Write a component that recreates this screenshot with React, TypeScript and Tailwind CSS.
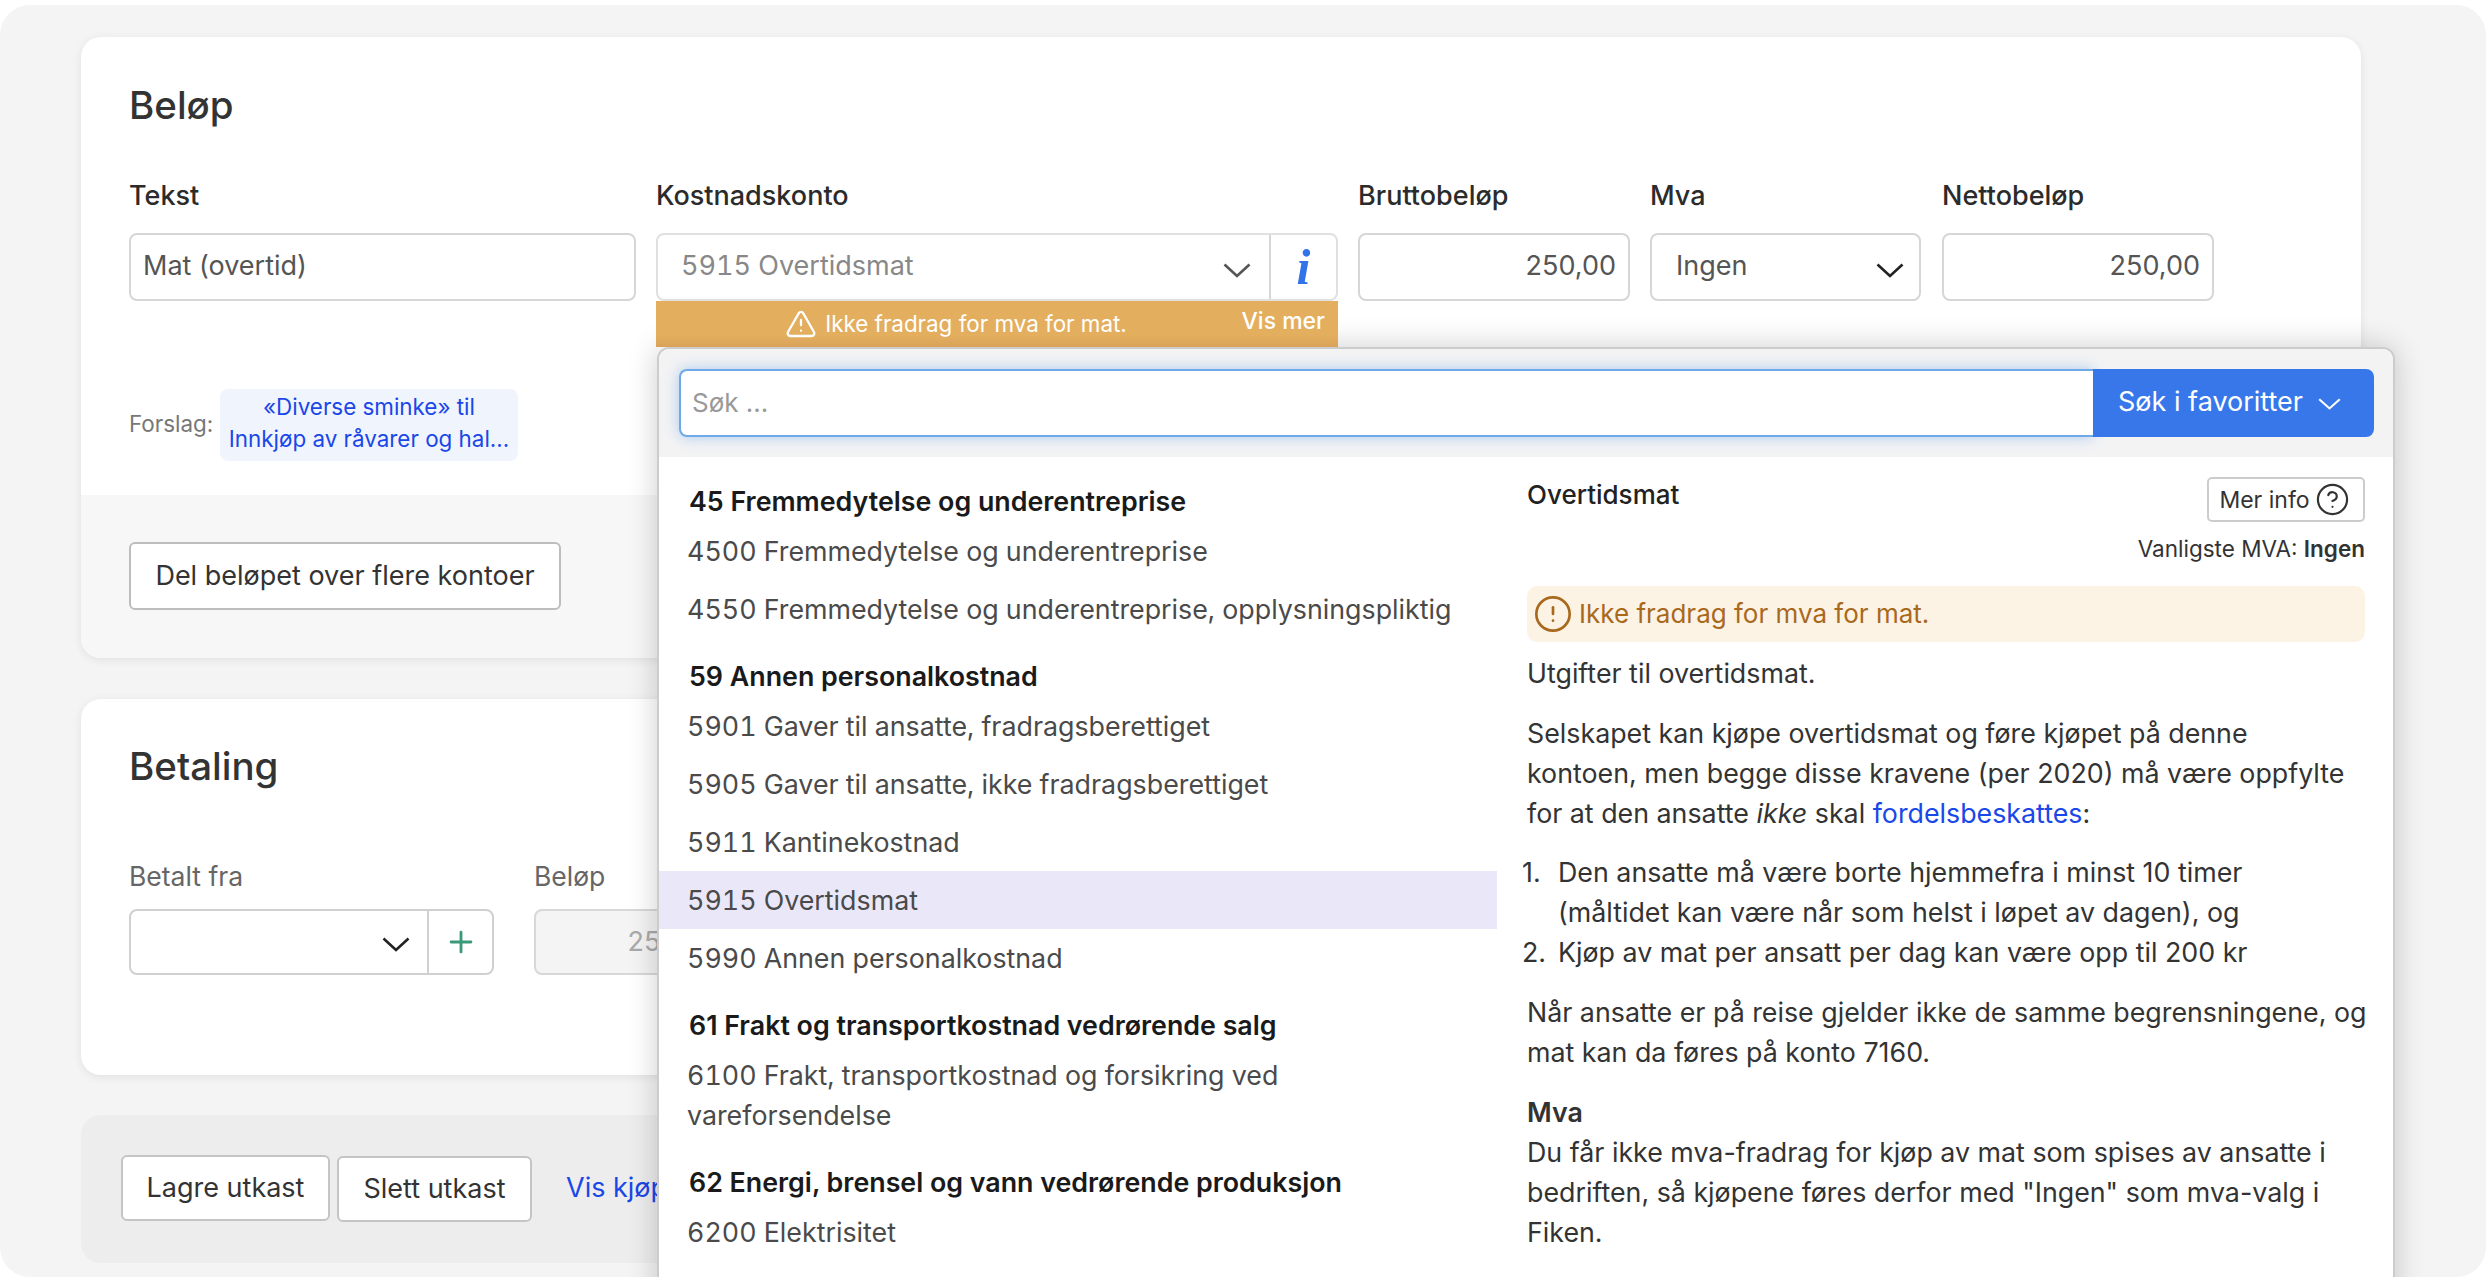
import React from 'react';
import { TriangleAlert, CircleHelp, CircleAlert, Plus } from 'lucide-react';

function Chevron({ className, w = 28, h = 15 }: { className?: string; w?: number; h?: number }) {
  return (
    <svg width={w} height={h} viewBox="0 0 28 15" fill="none" className={className} preserveAspectRatio="none">
      <path d="M1.5 1.5 L14 13 L26.5 1.5" stroke="currentColor" strokeWidth="2.6" />
    </svg>
  );
}

function Label({ children, light }: { children: React.ReactNode; light?: boolean }) {
  return (
    <div className={light ? 'h-[30px] text-[26.5px] leading-[30px] text-[#666]' : 'h-[30px] text-[27px] leading-[30px] font-medium whitespace-nowrap text-[#2b2b2b]'}>
      {children}
    </div>
  );
}

function Item({ children, active }: { children: React.ReactNode; active?: boolean }) {
  return (
    <div className={active ? 'bg-[#eae8f8] px-[28px] py-[9px] text-[26.8px] leading-[40px] text-[#4a4a4a] tabular-nums' : 'px-[28px] py-[9px] text-[26.8px] leading-[40px] text-[#4a4a4a] tabular-nums'}>
      {children}
    </div>
  );
}

function Heading({ children, first }: { children: React.ReactNode; first?: boolean }) {
  return (
    <div className={first ? 'px-[30px] pb-[2px] text-[26.8px] leading-[38px] font-semibold text-[#1a1a1a]' : 'mt-[19px] px-[30px] pb-[2px] text-[26.8px] leading-[38px] font-semibold text-[#1a1a1a]'}>
      {children}
    </div>
  );
}

function Popup() {
  return (
    <div className="absolute top-[166px] left-[1px] z-20 h-[1000px] w-[1738px] rounded-[12px] border-2 border-[#cccccc] bg-white shadow-[0_0_30px_rgba(0,0,0,0.2)]">
      <div className="flex h-[108px] rounded-t-[10px] bg-[#f3f3f4] pt-[20px] pr-[19px] pl-[20px]">
        <div className="flex h-[68px] flex-1 items-center rounded-l-[8px] border-2 border-r-0 border-[#6fa9e8] bg-white pb-[2px] pl-[11px] text-[26px] text-[#999] shadow-[0_0_14px_rgba(80,150,230,0.45)]">
          Søk ...
        </div>
        <div className="flex h-[68px] w-[281px] items-center rounded-r-[8px] bg-[#3877ea] pb-[2px] pl-[25px] text-[27px] text-white">
          Søk i favoritter
          <Chevron className="mt-[4px] ml-[15px] text-white" w={23} h={12} />
        </div>
      </div>
      <div className="flex">
        <div className="w-[838px] pt-[25px]">
          <Heading first>45 Fremmedytelse og underentreprise</Heading>
          <Item>4500 Fremmedytelse og underentreprise</Item>
          <Item>4550 Fremmedytelse og underentreprise, opplysningspliktig</Item>
          <Heading>59 Annen personalkostnad</Heading>
          <Item>5901 Gaver til ansatte, fradragsberettiget</Item>
          <Item>5905 Gaver til ansatte, ikke fradragsberettiget</Item>
          <Item>5911 Kantinekostnad</Item>
          <Item active>5915 Overtidsmat</Item>
          <Item>5990 Annen personalkostnad</Item>
          <Heading>61 Frakt og transportkostnad vedrørende salg</Heading>
          <Item>6100 Frakt, transportkostnad og forsikring ved vareforsendelse</Item>
          <Heading>62 Energi, brensel og vann vedrørende produksjon</Heading>
          <Item>6200 Elektrisitet</Item>
        </div>
        <div className="ml-[30px] w-[838px] pt-[20px] text-[26.8px] leading-[40px] whitespace-nowrap text-[#333]">
          <div className="flex items-start justify-between">
            <div className="text-[26px] leading-[36px] font-medium text-[#222]">Overtidsmat</div>
            <div className="flex h-[45px] w-[158px] items-center justify-center gap-[5px] rounded-[5px] border-2 border-[#ccc] pr-[3px] text-[23px] text-[#333]">
              Mer info
              <CircleHelp size={35} strokeWidth={1.5} />
            </div>
          </div>
          <div className="mt-[8px] text-right text-[22.5px] leading-[38px] text-[#333]">
            Vanligste MVA: <span className="font-semibold">Ingen</span>
          </div>
          <div className="mt-[18px] flex h-[56px] items-center rounded-[10px] bg-[#fcf3e4] pl-[6px] text-[26px] text-[#a8691e]">
            <CircleAlert size={40} strokeWidth={1.6} />
            <span className="ml-[6px]">Ikke fradrag for mva for mat.</span>
          </div>
          <p className="mt-[11px]">Utgifter til overtidsmat.</p>
          <p className="mt-[20px]">
            Selskapet kan kjøpe overtidsmat og føre kjøpet på denne
            <br />
            kontoen, men begge disse kravene (per 2020) må være oppfylte
            <br />
            for at den ansatte <em>ikke</em> skal <span className="text-[#1a47e8]">fordelsbeskattes</span>:
          </p>
          <ol className="mt-[19px] -ml-[5px]">
            <li className="flex">
              <span className="w-[36px] shrink-0">1.</span>
              <span>
                Den ansatte må være borte hjemmefra i minst 10 timer
                <br />
                (måltidet kan være når som helst i løpet av dagen), og
              </span>
            </li>
            <li className="flex">
              <span className="w-[36px] shrink-0">2.</span>
              <span>Kjøp av mat per ansatt per dag kan være opp til 200 kr</span>
            </li>
          </ol>
          <p className="mt-[20px]">
            Når ansatte er på reise gjelder ikke de samme begrensningene, og
            <br />
            mat kan da føres på konto 7160.
          </p>
          <p className="mt-[20px]">
            <span className="font-semibold">Mva</span>
            <br />
            Du får ikke mva-fradrag for kjøp av mat som spises av ansatte i
            <br />
            bedriften, så kjøpene føres derfor med "Ingen" som mva-valg i
            <br />
            Fiken.
          </p>
        </div>
      </div>
    </div>
  );
}

export default function App() {
  return (
    <div className="h-[1277px] overflow-hidden bg-white font-[Inter,sans-serif]">
      <div className="mt-[5px] h-[1272px] rounded-[30px] bg-[#f4f4f4] pt-[32px] pl-[81px]">
        <div className="w-[2280px] rounded-[20px] bg-white shadow-[0_2px_10px_rgba(0,0,0,0.08)]">
          <div className="px-[48px] pt-[46px] pb-[34px]">
            <h2 className="h-[44px] text-[38.5px] leading-[44px] font-medium text-[#333]">Beløp</h2>
            <div className="mt-[54px] flex items-start">
              <div className="w-[507px]">
                <Label>Tekst</Label>
                <div className="mt-[22px] flex h-[68px] items-center rounded-[8px] border-2 border-[#d6d6d6] pb-[2px] pl-[12px] text-[27px] text-[#555]">
                  Mat (overtid)
                </div>
                <div className="mt-[88px] flex items-center">
                  <span className="-mt-[3px] w-[91px] text-[22.4px] text-[#777]">Forslag:</span>
                  <div className="w-[298px] rounded-[8px] bg-[#f0f4fd] pt-[2px] pb-[6px] text-center text-[22.4px] leading-[32px] text-[#1a47e8]">
                    «Diverse sminke» til
                    <br />
                    Innkjøp av råvarer og hal...
                  </div>
                </div>
              </div>
              <div className="relative ml-[20px] w-[682px]">
                <Label>Kostnadskonto</Label>
                <div className="mt-[22px] flex h-[68px] rounded-[8px] border-2 border-[#e0e0e0]">
                  <div className="flex flex-1 items-center justify-between pr-[18px] pb-[2px] pl-[23px] text-[27px] text-[#888] tabular-nums">
                    5915 Overtidsmat
                    <Chevron className="mt-[8px] text-[#555]" />
                  </div>
                  <div className="flex w-[67px] items-center justify-center border-l-2 border-[#d6d6d6] font-['Liberation_Serif',serif] text-[50px] leading-none font-bold text-[#3273e9] italic">
                    i
                  </div>
                </div>
                <div className="relative z-30 flex h-[46px] items-center justify-center bg-[linear-gradient(#e4ae5f_75%,#d8a359)] pr-[82px] text-[22.4px] text-white">
                  <TriangleAlert size={32} strokeWidth={1.7} className="mr-[8px]" />
                  Ikke fradrag for mva for mat.
                  <span className="absolute top-[3px] right-[13px] text-[23px] font-medium">Vis mer</span>
                </div>
                <Popup />
              </div>
              <div className="ml-[20px] w-[272px]">
                <Label>Bruttobeløp</Label>
                <div className="mt-[22px] flex h-[68px] items-center justify-end rounded-[8px] border-2 border-[#d6d6d6] pr-[12px] pb-[2px] text-[27px] text-[#555]">
                  250,00
                </div>
              </div>
              <div className="ml-[20px] w-[271px]">
                <Label>Mva</Label>
                <div className="mt-[22px] flex h-[68px] items-center justify-between rounded-[8px] border-2 border-[#d6d6d6] pr-[15px] pb-[2px] pl-[24px] text-[27px] text-[#555]">
                  Ingen
                  <Chevron className="mt-[8px] text-[#222]" />
                </div>
              </div>
              <div className="ml-[21px] w-[272px]">
                <Label>Nettobeløp</Label>
                <div className="mt-[22px] flex h-[68px] items-center justify-end rounded-[8px] border-2 border-[#d6d6d6] pr-[12px] pb-[2px] text-[27px] text-[#555]">
                  250,00
                </div>
              </div>
            </div>
          </div>
          <div className="h-[163px] rounded-b-[20px] bg-[#f7f7f7] pt-[47px] pl-[48px]">
            <div className="flex h-[68px] w-[432px] items-center justify-center rounded-[6px] border-2 border-[#bdbdbd] bg-white text-[27px] text-[#333]">
              Del beløpet over flere kontoer
            </div>
          </div>
        </div>
        <div className="mt-[41px] h-[376px] w-[2280px] rounded-[20px] bg-white px-[48px] pt-[45px] shadow-[0_2px_10px_rgba(0,0,0,0.08)]">
          <h2 className="h-[44px] text-[38.5px] leading-[44px] font-medium text-[#333]">Betaling</h2>
          <div className="mt-[73px] flex">
            <div className="w-[365px]">
              <Label light>Betalt fra</Label>
              <div className="mt-[18px] flex h-[66px] rounded-[8px] border-2 border-[#d0d0d0]">
                <div className="flex flex-1 items-center justify-end pr-[17px]">
                  <Chevron className="mt-[4px] text-[#222]" />
                </div>
                <div className="flex w-[65px] items-center justify-center border-l-2 border-[#d0d0d0] text-[#3a9a78]">
                  <Plus size={34} strokeWidth={2} />
                </div>
              </div>
            </div>
            <div className="ml-[40px] w-[198px]">
              <Label light>Beløp</Label>
              <div className="mt-[18px] flex h-[66px] items-center justify-end rounded-[8px] border-2 border-[#d8d8d8] bg-[#f4f4f4] pr-[12px] text-[27px] text-[#aaa]">
                250,00
              </div>
            </div>
          </div>
        </div>
        <div className="mt-[40px] flex h-[148px] w-[2280px] items-center gap-[7px] rounded-[20px] bg-[#ededed] pb-[2px] pl-[40px]">
          <div className="flex h-[66px] w-[209px] items-center justify-center rounded-[6px] border-2 border-[#c4c4c4] bg-white text-[27px] text-[#333]">Lagre utkast</div>
          <div className="mt-[2px] flex h-[66px] w-[195px] items-center justify-center rounded-[6px] border-2 border-[#c4c4c4] bg-white text-[27px] text-[#333]">Slett utkast</div>
          <span className="ml-[27px] text-[27px] text-[#1a47e8]">Vis kjøpet</span>
        </div>
      </div>
    </div>
  );
}
